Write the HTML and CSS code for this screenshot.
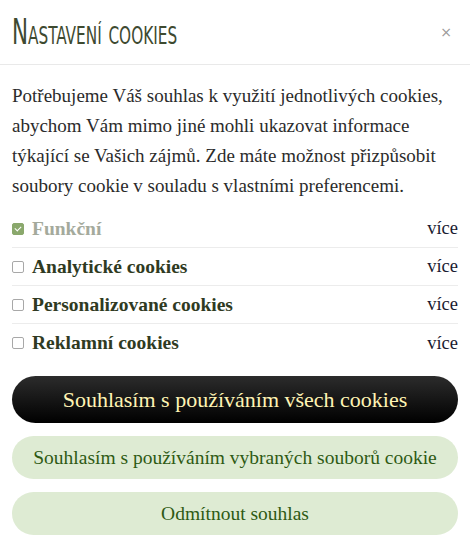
FILE: index.html
```html
<!DOCTYPE html>
<html lang="cs">
<head>
    <meta charset="UTF-8">
    <meta name="viewport" content="width=device-width, initial-scale=1.0">
    <title>Nastavení cookies</title>
    <link rel="stylesheet" href="styles.css">
</head>
<body>

    <div class="modal">
        <div class="modal-header">
            <h2><span>Nastavení cookies</span></h2>
            <button class="close" type="button">&times;</button>
        </div>

        <div class="modal-body">
            <p class="intro">Potřebujeme Váš souhlas k využití jednotlivých cookies, abychom Vám mimo jiné mohli ukazovat informace týkající se Vašich zájmů. Zde máte možnost přizpůsobit soubory cookie v souladu s vlastními preferencemi.</p>

            <ul class="cookie-list">
                <li class="disabled">
                    <label><span class="check checked"></span>Funkční</label>
                    <a href="#">více</a>
                </li>
                <li>
                    <label><span class="check"></span>Analytické cookies</label>
                    <a href="#">více</a>
                </li>
                <li>
                    <label><span class="check"></span>Personalizované cookies</label>
                    <a href="#">více</a>
                </li>
                <li>
                    <label><span class="check"></span>Reklamní cookies</label>
                    <a href="#">více</a>
                </li>
            </ul>

            <div class="actions">
                <button class="btn btn-dark" type="button">Souhlasím s používáním všech cookies</button>
                <button class="btn btn-light" type="button">Souhlasím s používáním vybraných souborů cookie</button>
                <button class="btn btn-light" type="button">Odmítnout souhlas</button>
            </div>
        </div>
    </div>

</body>
</html>
```

FILE: styles.css
```css
* {
    margin: 0;
    padding: 0;
    box-sizing: border-box;
}

body {
    background-color: white;
    font-family: "Liberation Serif", "DejaVu Serif", serif;
    color: #2b2b2b;
}

.modal {
    width: 470px;
}

.modal-header {
    display: flex;
    justify-content: space-between;
    align-items: center;
    height: 65px;
    padding: 0 12px;
    border-bottom: 1px solid #e9e9e9;
}

.modal-header h2 {
    font-family: "Liberation Sans Narrow", "DejaVu Sans Condensed", sans-serif;
    font-weight: normal;
    font-variant: small-caps;
    font-size: 35px;
    color: #3e4a30;
    white-space: nowrap;
    height: 40px;
}

.modal-header h2 span {
    display: inline-block;
    transform: scaleX(0.68);
    transform-origin: left center;
}

.close {
    background: none;
    border: none;
    color: #999;
    font-size: 14px;
    font-family: "DejaVu Sans", sans-serif;
    cursor: pointer;
    margin-right: 6px;
}

.modal-body {
    padding: 16px 12px 0;
}

.intro {
    font-size: 19px;
    line-height: 30px;
}

.cookie-list {
    list-style: none;
    margin-top: 9px;
}

.cookie-list li {
    display: flex;
    justify-content: space-between;
    align-items: center;
    height: 38px;
    border-bottom: 1px solid #ececec;
}

.cookie-list li:last-child {
    border-bottom: none;
}

.cookie-list label {
    display: flex;
    align-items: center;
    font-size: 19.5px;
    font-weight: bold;
    color: #2f3a22;
}

.cookie-list .disabled label {
    color: #a4aa9c;
}

.check {
    width: 12px;
    height: 12px;
    border: 1px solid #a8a8a8;
    border-radius: 2px;
    margin-right: 8px;
    position: relative;
}

.check.checked {
    background-color: #8aa86c;
    border-color: #8aa86c;
}

.check.checked::after {
    content: "";
    position: absolute;
    left: 3px;
    top: 1px;
    width: 3px;
    height: 5px;
    border: solid white;
    border-width: 0 1.5px 1.5px 0;
    transform: rotate(45deg);
}

.cookie-list a {
    font-size: 18.5px;
    color: #1a1a30;
    text-decoration: none;
}

.actions {
    display: flex;
    flex-direction: column;
    gap: 13px;
    margin-top: 14px;
}

.btn {
    width: 100%;
    border: none;
    font-family: "Liberation Serif", "DejaVu Serif", serif;
    cursor: pointer;
}

.btn-dark {
    height: 47px;
    border-radius: 24px;
    background: linear-gradient(#2c2c2c, #000);
    color: #fff4b4;
    font-size: 22px;
}

.btn-light {
    height: 43px;
    border-radius: 22px;
    background-color: #deebd3;
    color: #2e5a14;
    font-size: 19.5px;
}
```
